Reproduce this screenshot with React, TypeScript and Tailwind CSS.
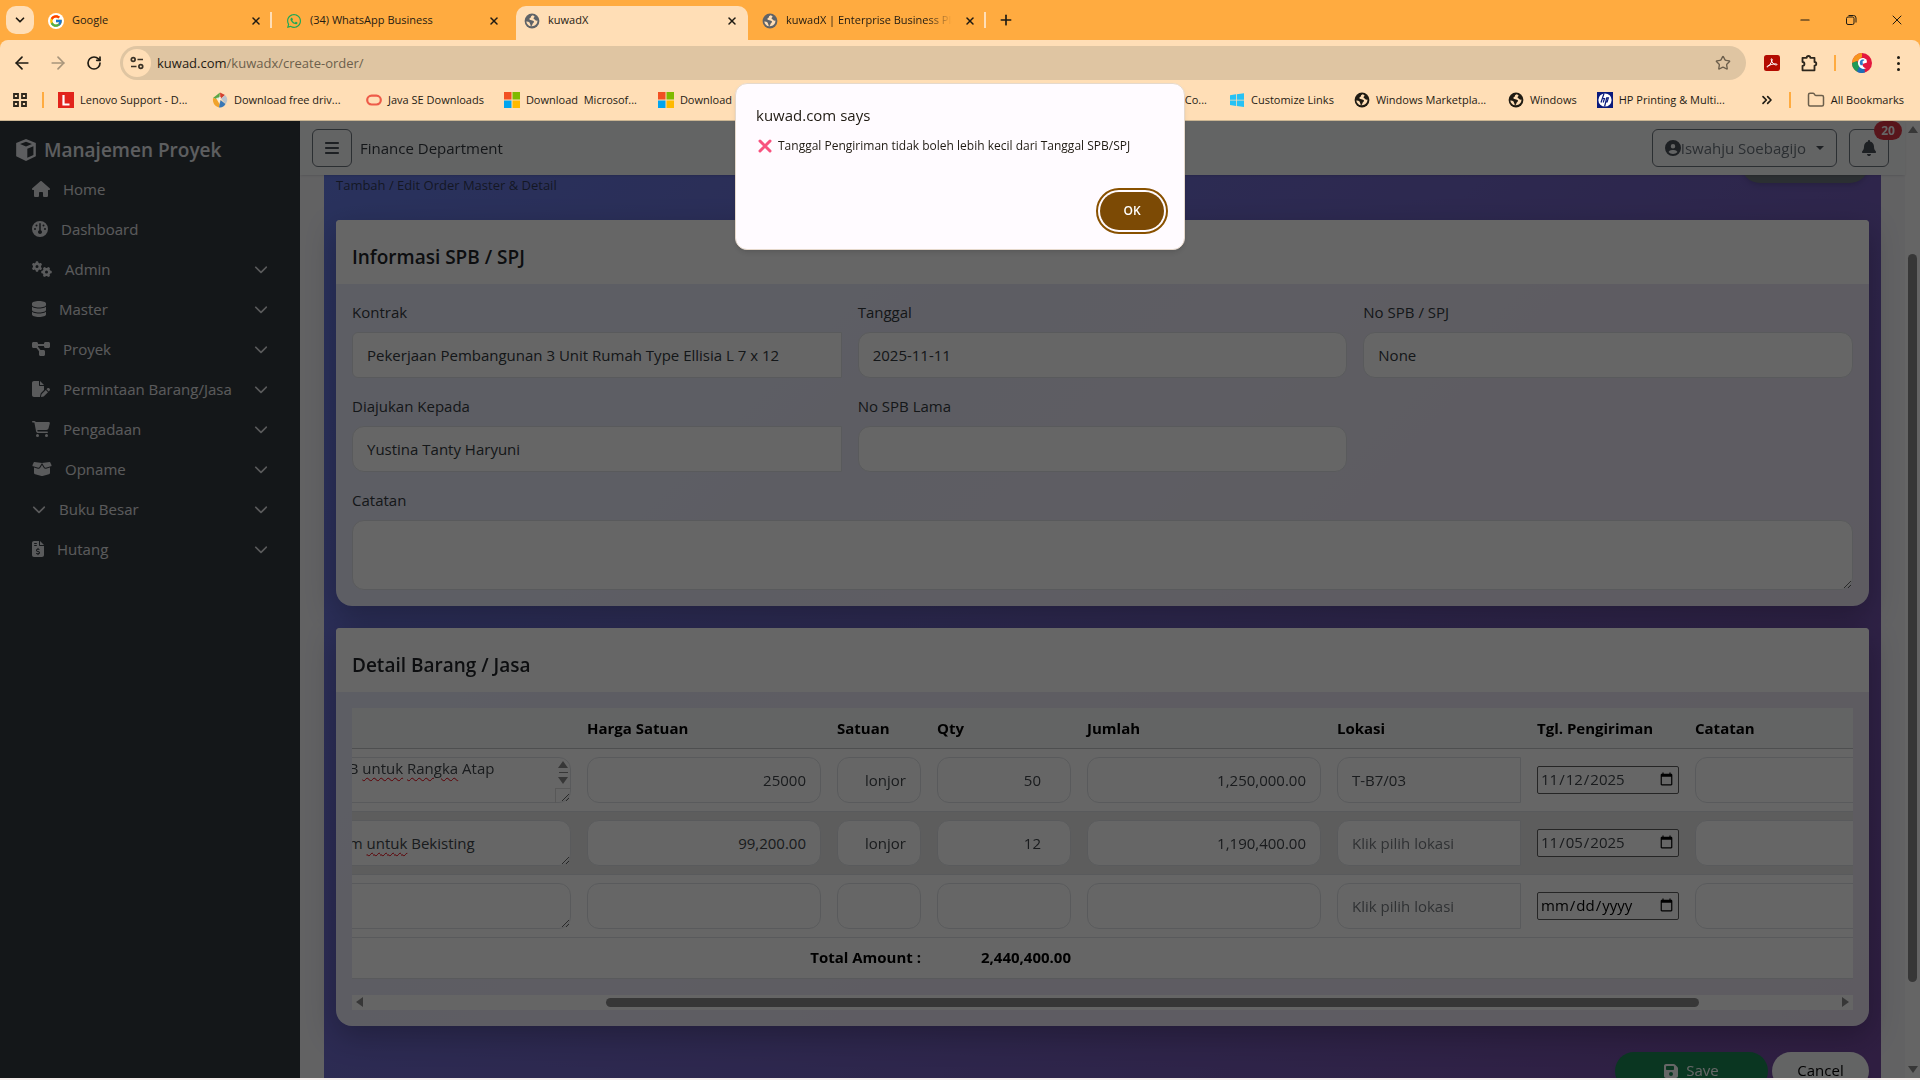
import { useLayoutEffect, useRef } from 'react'
import type { ReactNode } from 'react'
import clsx from 'clsx'
import type { IconType } from 'react-icons'
import {
  FaHouse,
  FaGauge,
  FaGears,
  FaDatabase,
  FaDiagramProject,
  FaFilePen,
  FaCartShopping,
  FaBoxOpen,
  FaChevronDown,
  FaFileInvoiceDollar,
  FaBars,
  FaCircleUser,
  FaBell,
  FaFloppyDisk,
  FaWhatsapp,
} from 'react-icons/fa6'
import { FcGoogle } from 'react-icons/fc'
import { ArrowLeft, ArrowRight, ChevronDown, ChevronsRight, Folder, Minus, Plus, RotateCw, Star, X } from 'lucide-react'

/* ---------- Browser icons ---------- */

function GlobeIcon({ className }: { className?: string }) {
  return (
    <svg viewBox="0 0 16 16" className={clsx('w-4 h-4 shrink-0', className)}>
      <circle cx="8" cy="8" r="7.4" fill="currentColor" />
      <path
        d="M8.6 2.2c-.9.5-1.9 1-1.6 1.9.3.8-1.6.7-1.6 1.9 0 1.3 1.9 1 2.9 1.6.9.5 1.9.5 1.7 1.5-.2.9-1.3 1.1-1.5 2-.2.8-.5 1.7-1.2 2.2 3.4.4 6.4-2.3 6.1-5.7-.9.1-1.8.1-2.2-.6-.4-.8-1.5-.6-1.6-1.5-.1-1 .9-1.3 1-2-.5-.7-1.2-1.1-2-1.3zM2.3 8.5c1.3-.1 2.5.2 3.2 1 .6.7.4 1.6 1 2.3.3.4.1.9.1 1.5-2.3-.5-4-2.4-4.3-4.8z"
        fill="#ffdeb6"
      />
    </svg>
  )
}

function LenovoIcon() {
  return (
    <svg viewBox="0 0 16 16" className="w-4 h-4 shrink-0">
      <rect width="16" height="16" fill="#e2231a" />
      <path d="M5.5 3v9.5H11.5" stroke="#fff" strokeWidth="2.2" fill="none" />
    </svg>
  )
}

function DriversIcon() {
  return (
    <svg viewBox="0 0 16 16" className="w-4 h-4 shrink-0">
      <path d="M1 6 8 .5 7 8z" fill="#5aa646" />
      <path d="M8 .5 13 3l-4.5 4z" fill="#d3402f" />
      <path d="M13 3c3 3 2.8 6 .5 9L9 6.5z" fill="#b9c3cc" />
      <path d="M1 6c-.6 4 1 8 6 9.5L8.5 8z" fill="#f0a32c" />
      <path d="M8.5 8 7 15.5c3 .4 5.2-1 6.5-3.5z" fill="#3977b5" />
      <path d="m4 6 5-1-1.5 7z" fill="#fff" opacity=".8" />
    </svg>
  )
}

function JavaIcon() {
  return (
    <svg viewBox="0 0 16 16" className="w-4 h-4 shrink-0">
      <rect x="1.2" y="3.7" width="13.6" height="8.8" rx="4.4" fill="none" stroke="#ee5b49" strokeWidth="2.2" />
    </svg>
  )
}

function MicrosoftIcon() {
  return (
    <svg viewBox="0 0 16 16" className="w-4 h-4 shrink-0">
      <rect width="7.5" height="7.5" fill="#f25022" />
      <rect x="8.5" width="7.5" height="7.5" fill="#7fba00" />
      <rect y="8.5" width="7.5" height="7.5" fill="#00a4ef" />
      <rect x="8.5" y="8.5" width="7.5" height="7.5" fill="#ffb900" />
    </svg>
  )
}

function WindowsIcon() {
  return (
    <svg viewBox="0 0 16 16" className="w-4 h-4 shrink-0">
      <path d="M1 3.2 7 2.3v5.4H1zM7.8 2.2 15 1.2v6.5H7.8zM1 8.5h6v5.4l-6-.9zM7.8 8.5H15V15l-7.2-1z" fill="#26c2f5" />
    </svg>
  )
}

function HpIcon() {
  return (
    <svg viewBox="0 0 16 16" className="w-4 h-4 shrink-0">
      <rect width="16" height="16" fill="#0a1a7c" />
      <circle cx="8" cy="8" r="6.6" fill="#fff" />
      <path d="M7 1.5 4 10.5M6 6.5h1.5L6.2 10.5M9.8 5.5 7.6 14.5M9.8 5.8h1.6l-1.3 4.2H8.7" stroke="#0a1a7c" strokeWidth="1.2" fill="none" />
    </svg>
  )
}

function SiteSettingsIcon() {
  return (
    <svg viewBox="0 0 16 16" className="w-4 h-4" fill="none" stroke="#3b3226" strokeWidth="1.7">
      <circle cx="4.2" cy="4.5" r="1.9" />
      <path d="M8.5 4.5H14M2 11.5h5.5" />
      <circle cx="11.8" cy="11.5" r="1.9" />
    </svg>
  )
}

function PdfIcon() {
  return (
    <svg viewBox="0 0 16 16" className="w-4 h-4 mr-1">
      <rect width="16" height="16" rx="2.5" fill="#b30b00" />
      <path
        d="M3.2 12c1.6-.6 4.6-4.4 5-7.2.2-1.4-1.2-1.5-1-.1.3 2.4 2.6 5.1 4.7 5.3 1.6.1 1.5-1.2-.2-1.2-2.2 0-5.4.8-7.6 2-1.3.7-1.5 1.5-.9 1.2z"
        fill="none"
        stroke="#fff"
        strokeWidth="1"
      />
    </svg>
  )
}

function ExtensionIcon() {
  return (
    <svg viewBox="0 0 18 18" className="w-[18px] h-[18px]" fill="none" stroke="#2d261c" strokeWidth="1.8" strokeLinejoin="round">
      <path d="M2.5 3.8h4.2a1.8 1.8 0 0 1 3.6 0h4.2v4.2a1.8 1.8 0 0 1 0 3.6v4.7H2.5v-4.5c2.6-.3 2.6-3.5 0-3.8z" />
    </svg>
  )
}

function ProfileIcon() {
  return (
    <svg viewBox="0 0 20 20" className="w-5 h-5">
      <circle cx="10" cy="10" r="10" fill="#e3173e" />
      <path d="M10 0A10 10 0 0 0 0 10l6-2 4-4z" fill="#f7941d" />
      <path d="M0 10a10 10 0 0 0 5 8.7L8 14 5 8z" fill="#1e9b57" />
      <path d="M5 18.7A10 10 0 0 0 13 19.5L12 14H7z" fill="#1c6fb8" />
      <path d="M14.5 6.5c-3-3-8-1.500-8.500 2.500-.4 3 1.500 6 5 7l3-.5c-2-1-4-2.500-3.500-4.500l4.500-1.500z" fill="#fff" />
      <path d="M8 8.500c.8-2 3-2.500 4.500-1.500l-2 1.500.5 3-2 1c-1-1-1.500-2.500-1-4z" fill="#2e7bc4" />
    </svg>
  )
}

/* ---------- Browser chrome ---------- */

interface TabProps {
  title: string
  icon: ReactNode
  active?: boolean
  divider?: boolean
}

function BrowserTab({ title, icon, active, divider }: TabProps) {
  return (
    <div
      className={clsx(
        'relative flex items-center w-[232px] h-[34px] pl-2 pr-[10px] pb-[5px] rounded-t-[10px]',
        active ? 'bg-[#ffdeb6]' : 'bg-transparent',
      )}
    >
      {icon}
      <span
        className={clsx(
          'ml-2 flex-1 overflow-hidden whitespace-nowrap text-[11px]',
          title.length > 25 && '[mask-image:linear-gradient(to_right,black_85%,transparent)]',
        )}
      >
        {title}
      </span>
      <button aria-label={`Close ${title}`} className="ml-3">
        <X className="w-3 h-3" strokeWidth={3} />
      </button>
      {divider && <span className="absolute right-0 top-[6px] w-[2px] h-4 bg-[#ffdeb6]" />}
    </div>
  )
}

interface BookmarkProps {
  title: string
  icon: ReactNode
}

function Bookmark({ title, icon }: BookmarkProps) {
  return (
    <a
      href="#"
      className={clsx('flex items-center gap-[6px] whitespace-pre', title.endsWith('...') ? 'w-[154px]' : 'pr-5')}
    >
      {icon}
      {title}
    </a>
  )
}

function BrowserChrome() {
  return (
    <div className="shrink-0 bg-[#ffab40] text-[#1f1b13]">
      {/* tab strip */}
      <div className="flex items-end h-10">
        <button aria-label="Search tabs" className="flex items-center justify-center w-7 h-7 mx-[6px] mb-[6px] rounded-[10px] bg-[#ffdeb6]">
          <ChevronDown className="w-[14px] h-[14px]" strokeWidth={3} />
        </button>
        <div className="flex flex-1 gap-[6px]">
          <BrowserTab
            title="Google"
            divider
            icon={
              <span className="flex items-center justify-center w-4 h-4 rounded-full bg-white">
                <FcGoogle className="w-[14px] h-[14px]" />
              </span>
            }
          />
          <BrowserTab title="(34) WhatsApp Business" icon={<FaWhatsapp className="w-4 h-4 text-[#1fa855]" />} />
          <BrowserTab title="kuwadX" active icon={<GlobeIcon className="text-[#5f6368]" />} />
          <BrowserTab title="kuwadX | Enterprise Business Platform" divider icon={<GlobeIcon className="text-[#5f6368]" />} />
          <button aria-label="New tab" className="ml-[6px] mb-[6px]">
            <Plus className="w-4 h-4" strokeWidth={2.5} />
          </button>
        </div>
        <div className="flex items-center h-10">
          <button aria-label="Minimize" className="flex justify-center w-[46px]">
            <Minus className="w-[14px] h-[14px]" strokeWidth={2} />
          </button>
          <button aria-label="Restore" className="flex justify-center w-[46px]">
            <svg viewBox="0 0 12 12" className="w-3 h-3" fill="none" stroke="currentColor">
              <rect x="1.5" y="3" width="7.5" height="7.5" rx="1.5" />
              <path d="M3.5 1.5h5A2.5 2.5 0 0 1 11 4v4.5" />
            </svg>
          </button>
          <button aria-label="Close" className="flex justify-center w-[46px]">
            <X className="w-4 h-4" strokeWidth={1.5} />
          </button>
        </div>
      </div>

      <div className="rounded-t-lg bg-[#ffdeb6] border-b border-[#cbb592]">
        {/* address bar */}
        <div className="flex items-center h-[46px] pl-3">
          <button aria-label="Back" className="w-9">
            <ArrowLeft className="w-5 h-5" />
          </button>
          <button aria-label="Forward" className="w-9 text-[#a8957b]">
            <ArrowRight className="w-5 h-5" />
          </button>
          <button aria-label="Reload" className="w-9">
            <RotateCw className="w-4 h-4 ml-[2px]" strokeWidth={2.5} />
          </button>
          <div className="flex flex-1 items-center h-[34px] px-[3px] rounded-full bg-[#dfc5a2]">
            <span className="flex items-center justify-center w-7 h-7 rounded-full bg-[#ffdeb6]">
              <SiteSettingsIcon />
            </span>
            <div className="flex-1 ml-[6px] pt-px text-[13px]">
              kuwad.com<span className="text-[#6c5f4c]">/kuwadx/create-order/</span>
            </div>
            <button aria-label="Bookmark this tab" className="mr-3 text-[#6c5f4c]">
              <Star className="w-4 h-4" />
            </button>
          </div>
          <div className="flex items-center gap-4 pl-[18px] pr-3">
            <PdfIcon />
            <ExtensionIcon />
            <span className="w-[2px] h-4 bg-[#ffab40]" />
            <ProfileIcon />
            <button aria-label="Menu" className="flex flex-col gap-[3px] items-center w-5">
              <i className="w-[3px] h-[3px] rounded-full bg-[#1f1b13]" />
              <i className="w-[3px] h-[3px] rounded-full bg-[#1f1b13]" />
              <i className="w-[3px] h-[3px] rounded-full bg-[#1f1b13]" />
            </button>
          </div>
        </div>
        {/* bookmarks */}
        <div className="flex items-center h-[34px] pb-[6px] pl-[13px] pr-4 text-[11px]">
          <svg viewBox="0 0 14 14" className="w-[14px] h-[14px] mr-[15px]" fill="none" stroke="#2d261c" strokeWidth="1.8">
            <path d="M1 1h4v4H1zM9 1h4v4H9zM1 9h4v4H1zM9 9h4v4H9z" />
          </svg>
          <span className="w-[2px] h-4 mr-[14px] bg-[#ffab40]" />
          <Bookmark title="Lenovo Support - D..." icon={<LenovoIcon />} />
          <Bookmark title="Download free driv..." icon={<DriversIcon />} />
          <Bookmark title="Java SE Downloads" icon={<JavaIcon />} />
          <Bookmark title="Download  Microsof..." icon={<MicrosoftIcon />} />
          <Bookmark title="Download" icon={<MicrosoftIcon />} />
          <span className="flex-1 pr-[22px] text-right">Co...</span>
          <Bookmark title="Customize Links" icon={<WindowsIcon />} />
          <Bookmark title="Windows Marketpla..." icon={<GlobeIcon />} />
          <Bookmark title="Windows" icon={<GlobeIcon />} />
          <Bookmark title="HP Printing & Multi..." icon={<HpIcon />} />
          <ChevronsRight className="w-4 h-4 ml-2 mr-[14px]" strokeWidth={2.5} />
          <span className="w-[2px] h-4 mr-4 bg-[#ffab40]" />
          <a href="#" className="flex items-center gap-[6px]">
            <Folder className="w-[18px] h-[18px] text-[#6c5f4c]" strokeWidth={2} />
            All Bookmarks
          </a>
        </div>
      </div>
    </div>
  )
}

function AlertDialog() {
  return (
    <div
      role="alertdialog"
      aria-labelledby="alert-title"
      className="absolute left-1/2 top-[83px] z-20 flex flex-col w-[450px] h-[167px] -translate-x-1/2 rounded-xl border border-[#e6d9cc] bg-[#fffbff] px-5 pt-[21px] pb-[19px] text-[#201b13] shadow-md"
    >
      <h2 id="alert-title" className="text-[15px] leading-5 font-medium">
        kuwad.com says
      </h2>
      <p className="flex items-center mt-[11px] text-xs leading-5 whitespace-nowrap">
        <svg viewBox="0 0 14 14" className="w-[14px] h-[14px] ml-[2px] mr-[6px]" stroke="#f8527e" strokeWidth="3" strokeLinecap="round">
          <path d="m2 2 10 10M12 2 2 12" />
        </svg>
        Tanggal Pengiriman tidak boleh lebih kecil dari Tanggal SPB/SPJ
      </p>
      <button className="mt-auto ml-auto w-16 h-[38px] rounded-full bg-[#7c4a05] text-xs font-semibold text-white outline-2 outline-offset-2 outline-[#895100]">
        OK
      </button>
    </div>
  )
}

/* ---------- App shell ---------- */

interface MenuItem {
  label: string
  icon: IconType
  size: string
  expandable?: boolean
}

const menu: MenuItem[] = [
  { label: 'Home', icon: FaHouse, size: 'w-[18px]' },
  { label: 'Dashboard', icon: FaGauge, size: 'w-4' },
  { label: 'Admin', icon: FaGears, size: 'w-5', expandable: true },
  { label: 'Master', icon: FaDatabase, size: 'w-[14px]', expandable: true },
  { label: 'Proyek', icon: FaDiagramProject, size: 'w-[18px]', expandable: true },
  { label: 'Permintaan Barang/Jasa', icon: FaFilePen, size: 'w-[18px]', expandable: true },
  { label: 'Pengadaan', icon: FaCartShopping, size: 'w-[18px]', expandable: true },
  { label: 'Opname', icon: FaBoxOpen, size: 'w-5', expandable: true },
  { label: 'Buku Besar', icon: FaChevronDown, size: 'w-[14px]', expandable: true },
  { label: 'Hutang', icon: FaFileInvoiceDollar, size: 'w-3', expandable: true },
]

function Sidebar() {
  return (
    <aside className="w-[300px] shrink-0 bg-[#343a40] pt-[11px] text-[#e2e3e5]">
      <div className="flex items-center h-9 mb-px pl-[14px] gap-[6px] text-[19px] font-semibold text-[#e9ecef]">
        <svg viewBox="0 0 22 22" className="w-6 h-6" fill="currentColor">
          <path fillRule="evenodd" d="M11 1 2 4.5v12.2L11 21l9-4.3V4.5zm0 2.4 5.5 2.1L11 7.7 5.5 5.5zM12.2 9.8l5.6-2.3v8l-5.6 2.7z" />
        </svg>
        Manajemen Proyek
      </div>
      <nav>
        {menu.map(({ label, icon: Icon, size, expandable }) => (
          <a key={label} href="#" className="flex items-center h-10 pl-8 pr-8 gap-[13px] text-[15px]">
            <Icon className={clsx('h-4 shrink-0', size)} />
            <span className="flex-1">{label}</span>
            {expandable && <FaChevronDown className="w-[14px] h-4 shrink-0" />}
          </a>
        ))}
      </nav>
    </aside>
  )
}

function Topbar() {
  return (
    <header className="relative z-10 flex items-center h-[54px] shrink-0 px-3 bg-[#f8f9fa] text-[15px] shadow-sm">
      <button aria-label="Toggle menu" className="flex items-center justify-center w-10 h-[38px] rounded-md border border-[#6c757d] text-[#495057]">
        <FaBars className="w-[14px] h-4" />
      </button>
      <span className="flex-1 pl-2 text-[#343a40]">Finance Department</span>
      <button className="flex items-center h-[38px] px-3 rounded-md border border-[#6c757d] text-[#6c757d]">
        <FaCircleUser className="w-4 h-4 text-[#495057]" />
        Iswahju Soebagijo
        <span className="ml-[10px] border-x-4 border-t-4 border-x-transparent border-t-[#495057]" />
      </button>
      <button aria-label="Notifications" className="relative flex items-center justify-center w-10 h-[38px] ml-3 mr-1 rounded-md border border-[#6c757d] text-[#495057]">
        <FaBell className="w-[14px] h-4" />
        <span className="absolute -top-[9px] -right-[14px] w-7 rounded-full bg-[#dc3545] text-xs leading-[19px] font-bold text-white">20</span>
      </button>
    </header>
  )
}

/* ---------- Order form ---------- */

const control = 'w-full h-[46px] px-[14px] border border-[#dfe2e6] bg-white'

interface FieldProps {
  id: string
  label: string
  value?: string
  shape?: string
}

function Field({ id, label, value, shape = 'rounded-xl' }: FieldProps) {
  return (
    <div>
      <label htmlFor={id} className="block h-6 mb-2 leading-6">
        {label}
      </label>
      <input id={id} defaultValue={value} className={clsx(control, shape)} />
    </div>
  )
}

function Card({ title, children }: { title: string; children: ReactNode }) {
  return (
    <section className="rounded-t rounded-b-2xl bg-white/85 shadow-[0_10px_30px_rgba(0,0,0,0.25)]">
      <h2 className="h-16 px-4 pt-[25px] rounded-t bg-white text-[19px] leading-6 font-semibold text-[#212529]">{title}</h2>
      <div className="p-4">{children}</div>
    </section>
  )
}

interface Line {
  spec: ReactNode
  text: string
  overflow?: boolean
  price: string
  unit: string
  qty: string
  total: string
  location: string
  date: string
}

const typo = 'underline decoration-wavy decoration-red-600 decoration-1 underline-offset-[3px]'

const lines: Line[] = [
  {
    text: 'Kayu 2B untuk Rangka Atap',
    spec: <>Kayu 2B <u className={typo}>untuk</u> <u className={typo}>Rangka</u> Atap</>,
    overflow: true,
    price: '25000',
    unit: 'lonjor',
    qty: '50',
    total: '1,250,000.00',
    location: 'T-B7/03',
    date: '2025-11-12',
  },
  {
    text: 'Kayu 4m untuk Bekisting',
    spec: <>Kayu 4m <u className={typo}>untuk</u> Bekisting</>,
    price: '99,200.00',
    unit: 'lonjor',
    qty: '12',
    total: '1,190,400.00',
    location: '',
    date: '2025-11-05',
  },
  { text: '', spec: null, price: '', unit: '', qty: '', total: '', location: '', date: '' },
]

function SpecCell({ line }: { line: Line }) {
  const box = clsx(
    '[grid-area:1/1] h-[46px] w-full pl-[14px] pr-4 border whitespace-nowrap overflow-hidden rounded-xl',
    line.overflow ? 'pt-0 leading-5' : 'pt-[10px] leading-6',
  )
  return (
    <div className="relative grid">
      <textarea aria-label="Barang" defaultValue={line.text} spellCheck={false} className={clsx(box, 'border-[#dfe2e6] bg-white')} />
      {/* spelling marks sit over the text */}
      <div aria-hidden className={clsx(box, 'relative pointer-events-none border-transparent text-transparent')}>
        {line.spec}
      </div>
      {line.overflow && (
        <div aria-hidden className="absolute right-0 top-0 flex flex-col items-center w-4 h-[46px] pt-1 pointer-events-none">
          <i className="border-x-[5px] border-b-[7px] border-x-transparent border-b-[#8b8b8b]" />
          <i className="w-[9px] h-px my-1 bg-[#8b8b8b]" />
          <i className="border-x-[5px] border-t-[7px] border-x-transparent border-t-[#8b8b8b]" />
          <i className="w-4 flex-1 mt-1 border-l border-t border-[#dcdcdc]" />
        </div>
      )}
    </div>
  )
}

function DetailTable() {
  const scroller = useRef<HTMLDivElement>(null)

  useLayoutEffect(() => {
    if (scroller.current) scroller.current.scrollLeft = 328
  }, [])

  return (
    <>
      <div ref={scroller} className="overflow-x-auto [scrollbar-width:none] mb-4">
        <table className="table-fixed w-[2017px] bg-white">
          <colgroup>
            <col className="w-[255px]" />
            <col className="w-[300px]" />
            <col className="w-[250px]" />
            <col className="w-[100px]" />
            <col className="w-[150px]" />
            <col className="w-[250px]" />
            <col className="w-[200px]" />
            <col className="w-[158px]" />
            <col />
          </colgroup>
          <thead>
            <tr className="h-10 bg-[#f8f9fa] border-b border-[#c4c6c8] text-left text-black">
              <th className="px-2">Kode</th>
              <th className="px-2">Barang</th>
              <th className="px-2">Harga Satuan</th>
              <th className="px-2">Satuan</th>
              <th className="px-2">Qty</th>
              <th className="px-2">Jumlah</th>
              <th className="px-2">Lokasi</th>
              <th className="px-2">Tgl. Pengiriman</th>
              <th className="px-2">Catatan</th>
            </tr>
          </thead>
          <tbody className="text-[#41464b]">
            {lines.map((line, i) => (
              <tr key={i} className="h-[63px] border-b border-[#dee2e6] even:bg-[#e8e8e8]">
                <td className="px-2">
                  <input aria-label="Kode" className={clsx(control, 'rounded-xl')} />
                </td>
                <td className="px-2">
                  <SpecCell line={line} />
                </td>
                <td className="px-2">
                  <input aria-label="Harga Satuan" defaultValue={line.price} className={clsx(control, 'rounded-xl text-right')} />
                </td>
                <td className="px-2">
                  <input aria-label="Satuan" defaultValue={line.unit} className={clsx(control, 'rounded-xl text-right')} />
                </td>
                <td className="px-2">
                  <input
                    aria-label="Qty"
                    defaultValue={line.qty}
                    className="w-full h-[46px] pl-3 pr-[29px] rounded-xl border border-[#dfe2e6] bg-white text-right"
                  />
                </td>
                <td className="px-2">
                  <input aria-label="Jumlah" defaultValue={line.total} className={clsx(control, 'rounded-xl text-right')} />
                </td>
                <td className="px-2">
                  <input
                    aria-label="Lokasi"
                    placeholder="Klik pilih lokasi"
                    defaultValue={line.location}
                    className={clsx(control, 'rounded-l-xl placeholder:text-[#777c81]')}
                  />
                </td>
                <td className="px-2">
                  <input
                    aria-label="Tgl. Pengiriman"
                    type="date"
                    defaultValue={line.date}
                    className={clsx('w-full h-7 px-[2px] rounded-xs border border-[#5c5c5c] bg-white', !line.date && 'text-black')}
                  />
                </td>
                <td className="px-2">
                  <input aria-label="Catatan" className={clsx(control, 'rounded-xl')} />
                </td>
              </tr>
            ))}
          </tbody>
          <tfoot>
            <tr className="h-[41px] border-b border-[#dee2e6] text-right font-bold text-black">
              <td colSpan={4} className="px-2">Total Amount :</td>
              <td className="px-2">2,440,400.00</td>
              <td colSpan={4} />
            </tr>
          </tfoot>
        </table>
      </div>

      {/* horizontal scrollbar */}
      <div className="flex items-center h-[15px] px-1 bg-[#fcfcfc]">
        <i className="border-y-[5px] border-r-[7px] border-y-transparent border-r-[#8b8b8b]" />
        <div className="flex flex-1 pl-2 pr-1">
          <i className="w-[16%]" />
          <i className="w-[74.5%] h-[9px] rounded-full bg-[#8b8b8b]" />
        </div>
        <i className="border-y-[5px] border-l-[7px] border-y-transparent border-l-[#8b8b8b]" />
      </div>
    </>
  )
}

function OrderPage() {
  const scroller = useRef<HTMLDivElement>(null)

  useLayoutEffect(() => {
    if (scroller.current) scroller.current.scrollTop = 79
  }, [])

  return (
    <main ref={scroller} className="flex-1 min-h-0 overflow-y-auto [scrollbar-width:none] bg-[#f4f4f8] p-6">
      <div className="p-3 bg-linear-135 from-[#667eea] to-[#764ba2] text-[15px] text-[#343a40]">
        <div className="flex items-center justify-between h-16 mb-6">
          <div>
            <h1 className="h-[43px] text-3xl leading-9 font-medium">Order</h1>
            <p className="text-[13px] leading-[21px] text-[#212529]/75">Tambah / Edit Order Master &amp; Detail</p>
          </div>
          <button aria-label="Kembali" className="w-32 h-[38px] rounded-full bg-[#6c757d] shadow-md" />
        </div>

        <form className="flex flex-col">
          <Card title="Informasi SPB / SPJ">
            <div className="grid grid-cols-3 gap-4">
              <Field id="kontrak" label="Kontrak" value="Pekerjaan Pembangunan 3 Unit Rumah Type Ellisia L 7 x 12" shape="rounded-l-md" />
              <Field id="tanggal" label="Tanggal" value="2025-11-11" />
              <Field id="no-spb" label="No SPB / SPJ" value="None" />
              <Field id="diajukan" label="Diajukan Kepada" value="Yustina Tanty Haryuni" shape="rounded-l-xl" />
              <Field id="no-spb-lama" label="No SPB Lama" />
              <div className="col-span-3">
                <label htmlFor="catatan" className="block h-6 mb-2 leading-6">
                  Catatan
                </label>
                <textarea id="catatan" className="block w-full h-[70px] px-[14px] py-2 rounded-xl border border-[#dfe2e6] bg-white" />
              </div>
            </div>
          </Card>

          <div className="h-[22px]" />

          <Card title="Detail Barang / Jasa">
            <DetailTable />
          </Card>

          <div className="flex justify-end gap-1 mt-[26px]">
            <button type="button" className="flex items-center justify-center gap-2 w-[153px] h-[38px] rounded-full bg-[#198754] text-white shadow-md">
              <FaFloppyDisk className="w-[14px] h-4" />
              Save
            </button>
            <button type="button" className="w-[97px] h-[38px] rounded-full bg-[#f8f9fa] text-black shadow-md">
              Cancel
            </button>
          </div>
        </form>
      </div>
    </main>
  )
}

function PageScrollbar() {
  return (
    <div className="flex flex-col items-center w-[15px] shrink-0 py-[5px] bg-[#fcfcfc]">
      <i className="border-x-[5px] border-b-[7px] border-x-transparent border-b-[#8b8b8b]" />
      <div className="flex flex-col flex-1 w-[9px]">
        <i className="h-[13%]" />
        <i className="h-[78%] rounded-full bg-[#8b8b8b]" />
      </div>
      <i className="border-x-[5px] border-t-[7px] border-x-transparent border-t-[#8b8b8b]" />
    </div>
  )
}

export default function App() {
  return (
    <div className="relative flex flex-col h-screen overflow-hidden bg-[#f5eeec] font-['Open_Sans','Noto_Sans',sans-serif]">
      <BrowserChrome />
      <AlertDialog />
      <div className="relative flex flex-1 min-h-0 mb-[2px] overflow-hidden">
        <Sidebar />
        <div className="flex flex-col flex-1 min-w-0">
          <Topbar />
          <OrderPage />
        </div>
        <PageScrollbar />
        <div className="absolute inset-0 z-10 bg-black/60" />
      </div>
    </div>
  )
}
